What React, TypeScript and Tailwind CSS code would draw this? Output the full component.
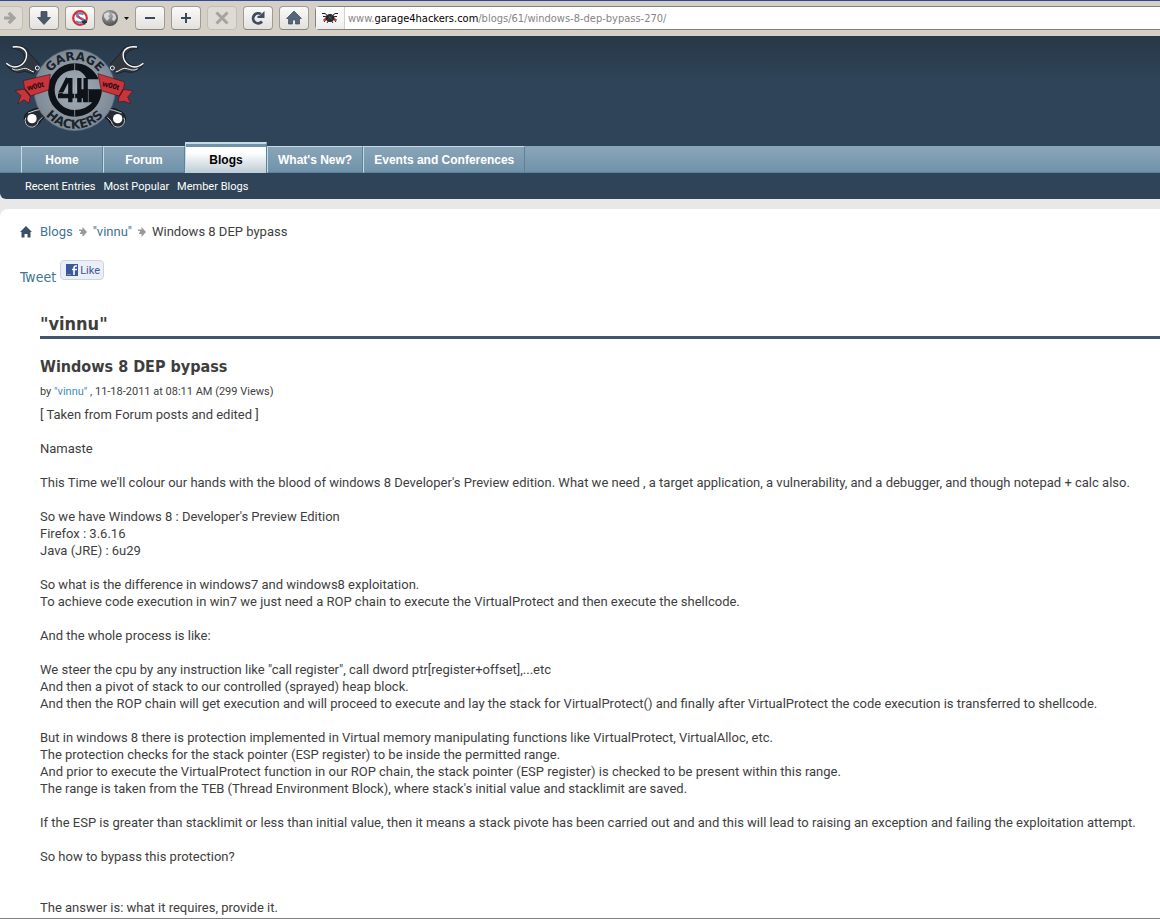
import type { ReactNode } from "react";

const tabs = [
  { label: "Home", active: false },
  { label: "Forum", active: false },
  { label: "Blogs", active: true },
  { label: "What's New?", active: false },
  { label: "Events and Conferences", active: false },
];

const subLinks = ["Recent Entries", "Most Popular", "Member Blogs"];

const paragraphs: string[][] = [
  ["[ Taken from Forum posts and edited ]"],
  ["Namaste"],
  [
    "This Time we'll colour our hands with the blood of windows 8 Developer's Preview edition. What we need , a target application, a vulnerability, and a debugger, and though notepad + calc also.",
  ],
  ["So we have Windows 8 : Developer's Preview Edition", "Firefox : 3.6.16", "Java (JRE) : 6u29"],
  [
    "So what is the difference in windows7 and windows8 exploitation.",
    "To achieve code execution in win7 we just need a ROP chain to execute the VirtualProtect and then execute the shellcode.",
  ],
  ["And the whole process is like:"],
  [
    'We steer the cpu by any instruction like "call register", call dword ptr[register+offset],...etc',
    "And then a pivot of stack to our controlled (sprayed) heap block.",
    "And then the ROP chain will get execution and will proceed to execute and lay the stack for VirtualProtect() and finally after VirtualProtect the code execution is transferred to shellcode.",
  ],
  [
    "But in windows 8 there is protection implemented in Virtual memory manipulating functions like VirtualProtect, VirtualAlloc, etc.",
    "The protection checks for the stack pointer (ESP register) to be inside the permitted range.",
    "And prior to execute the VirtualProtect function in our ROP chain, the stack pointer (ESP register) is checked to be present within this range.",
    "The range is taken from the TEB (Thread Environment Block), where stack's initial value and stacklimit are saved.",
  ],
  [
    "If the ESP is greater than stacklimit or less than initial value, then it means a stack pivote has been carried out and and this will lead to raising an exception and failing the exploitation attempt.",
  ],
  ["So how to bypass this protection?"],
];

function ToolButton({ label, faded, children }: { label: string; faded?: boolean; children: ReactNode }) {
  return (
    <button
      type="button"
      aria-label={label}
      className={
        faded
          ? "flex h-6 w-[30px] shrink-0 items-center justify-center rounded-sm border border-[#c3beb5] bg-[#dedad4]"
          : "flex h-6 w-[30px] shrink-0 items-center justify-center rounded-sm border border-[#a09c94] border-b-[#88857f] bg-linear-to-b from-[#fafaf9] to-[#e3e1de]"
      }
    >
      {children}
    </button>
  );
}

function Toolbar() {
  return (
    <div className="flex h-9 items-center gap-1.5 overflow-hidden border-t border-[#2f4a96] bg-[#d5d0c7] pb-px">
      <div className="-ml-[7px] flex shrink-0 gap-1.5">
        <ToolButton label="Forward" faded>
          <svg width="16" height="16" viewBox="0 0 16 16" className="ml-1">
            <path d="M2 6.500h6L5.500 4 8 1.800 14.200 8 8 14.200 5.500 12 8 9.500H2z" fill="#a5a39f" />
          </svg>
        </ToolButton>
        <ToolButton label="Downloads">
          <svg width="16" height="16" viewBox="0 0 16 16">
            <path d="M5 1.500h6v6h3.500L8 14.500 1.500 7.500H5z" fill="#4a5868" stroke="#33414f" strokeWidth=".7" />
          </svg>
        </ToolButton>
        <ToolButton label="Script blocker">
          <svg width="18" height="18" viewBox="0 0 18 18">
            <circle cx="9" cy="9" r="6.800" fill="#fff" stroke="#d92b2f" strokeWidth="2.200" />
            <path d="M4.500 4.500 14 13.500" stroke="#d92b2f" strokeWidth="1.600" />
            <path d="M12.500 5.500C10 3.500 5.500 4.200 6 6.800s7 2 6.500 4.700S7 14 5 12" fill="none" stroke="#6288bd" strokeWidth="2.200" />
            <path d="M7 7.500 11 10.500" stroke="#d92b2f" strokeWidth="1.500" />
            <path d="M13.500 10.500v5M11 13h5" stroke="#24344d" strokeWidth="1.800" />
          </svg>
        </ToolButton>
      </div>
      <button type="button" aria-label="Site menu" className="flex h-6 w-7 shrink-0 items-center justify-between">
        <svg width="18" height="18" viewBox="0 0 18 18">
          <defs>
            <radialGradient id="globe" cx=".4" cy=".3" r=".7">
              <stop offset="0" stopColor="#b4b4b4" />
              <stop offset="1" stopColor="#505050" />
            </radialGradient>
          </defs>
          <circle cx="9" cy="9" r="8" fill="url(#globe)" />
          <path d="M3 5l4-2 2 1.500-2 2.500 1.500 2L6 12 3 8zM10 4l4 1 1.500 4-2.500 3.500-2-2L12 7z" fill="#e6e6e6" opacity=".8" />
        </svg>
        <svg width="5" height="3" viewBox="0 0 5 3">
          <path d="M0 0h5L2.500 3z" fill="#111" />
        </svg>
      </button>
      <ToolButton label="Zoom out">
        <svg width="12" height="12" viewBox="0 0 12 12">
          <path d="M1 6h10" stroke="#39485a" strokeWidth="2" />
        </svg>
      </ToolButton>
      <ToolButton label="Zoom in">
        <svg width="12" height="12" viewBox="0 0 12 12">
          <path d="M1 6h10M6 1v10" stroke="#39485a" strokeWidth="2" />
        </svg>
      </ToolButton>
      <ToolButton label="Stop" faded>
        <svg width="14" height="14" viewBox="0 0 14 14">
          <path d="M1.500 1.500l11 11M12.500 1.500l-11 11" stroke="#a5a39f" strokeWidth="3" />
        </svg>
      </ToolButton>
      <ToolButton label="Reload">
        <svg width="16" height="16" viewBox="0 0 16 16">
          <path d="M11 4.200A5 5 0 1 0 12 11.500" fill="none" stroke="#3f4d5d" strokeWidth="2.800" />
          <path d="M14.500 1v7H7.500V6l2.500-.5z" fill="#3f4d5d" />
        </svg>
      </ToolButton>
      <ToolButton label="Home page">
        <svg width="16" height="16" viewBox="0 0 16 16">
          <path d="M8 1 .5 8.500h2V14h4v-4h3v4h4V8.500h2z" fill="#566677" stroke="#3c4a5a" strokeWidth=".7" />
        </svg>
      </ToolButton>
      <form
        className="-mr-1 flex h-6 grow items-center rounded-sm border border-[#82827e] bg-white"
        onSubmit={(event) => event.preventDefault()}
      >
        <button
          type="button"
          aria-label="Site identity"
          className="flex h-full w-[29px] shrink-0 items-center justify-center border-r border-[#d0d0d0] bg-linear-to-b from-white to-[#ededed]"
        >
          <svg width="18" height="14" viewBox="0 0 18 14">
            <path
              d="M1 2.500h3l3 2.500M17 2.500h-3l-3 2.500M2 5.500h2l3 1M16 5.500h-2l-3 1M3 11l2-2.500L8 7.500M15 11l-2-2.500-3-1M6 12l2-3M12 12l-2-3"
              fill="none"
              stroke="#222"
              strokeWidth="1"
            />
            <path d="M2.500 9.500 5 7.500M15.500 9.500 13 7.500" stroke="#d33" strokeWidth="1.800" />
            <ellipse cx="9" cy="7" rx="4.500" ry="4" fill="#252a2a" />
            <path d="M7 4.500l4 4M11 4.500l-4 4" stroke="#666" strokeWidth=".8" />
          </svg>
        </button>
        <a
          href="#address"
          className="pl-[3px] font-['DejaVu_Sans_Condensed','DejaVu_Sans',sans-serif] text-[11px] whitespace-nowrap text-[#858585]"
        >
          www.<span className="text-black">garage4hackers.com</span>/blogs/61/windows-8-dep-bypass-270/
        </a>
      </form>
    </div>
  );
}

function Wrench() {
  return (
    <g>
      <path
        d="M35 36C52 25 83 29 87 51L118 84 101 114 75 106C54 114 29 106 20 86 38 94 58 90 69 76 79 61 72 42 35 36z"
        fill="#30373f"
        stroke="#11171d"
        strokeWidth="2"
      />
      <path d="M38 33C58 30 73 35 79 50 83 73 66 92 44 93 33 93 25 87 19 82" fill="none" stroke="#fff" strokeWidth="4" />
      <path d="M36 98C52 108 62 97 76 97 86 98 92 106 102 108" fill="none" stroke="#eef1f4" strokeWidth="3" />
      <circle cx="112" cy="96" r="6" fill="#30373f" stroke="#eef1f4" strokeWidth="3" />
      <path d="M124 218 104 218 84 228C62 243 75 277 100 272 111 270 118 266 122 254L134 244z" fill="#252b31" stroke="#0f1318" strokeWidth="3" />
      <circle cx="96" cy="248" r="14" fill="#fff" />
      <path d="M77 245a20 20 0 1 0 38 11l12-12M84 231l24-8 14-3" fill="none" stroke="#dfe4e8" strokeWidth="2.500" />
    </g>
  );
}

function Logo() {
  return (
    <svg width="160" height="108" viewBox="0 0 480 324" role="img" aria-label="Garage Hackers">
      <defs>
        <radialGradient id="disc">
          <stop offset="0" stopColor="#a9b1b9" />
          <stop offset="1" stopColor="#7d8995" />
        </radialGradient>
        <path id="top-arc" d="M134 163a90 90 0 0 1 180 0" />
        <path id="bottom-arc" d="M109 163a115 115 0 0 0 230 0" />
      </defs>
      <Wrench />
      <g transform="translate(449 0) scale(-1 1)">
        <Wrench />
      </g>
      <circle cx="224" cy="162" r="122" fill="url(#disc)" stroke="#566878" strokeWidth="2" />
      <path
        d="M296 130C283 99 256 82 224 82A80 80 0 1 0 224 242C270 242 304 208 306 160H238V199H277C264 214 246 222 224 222A60 60 0 1 1 224 102C240 102 252 112 261 130z"
        fill="#0d1319"
      />
      <path d="M70 134 151 115 146 162 91 180 87 202 72 191 53 204 63 179 45 164 74 159z" fill="#c8343b" stroke="#4a151a" strokeWidth="2" />
      <path d="M294 113 374 138 370 160 399 165 383 183 392 203 373 196 354 198 358 180 304 164z" fill="#c8343b" stroke="#4a151a" strokeWidth="2" />
      <path d="M74 159 91 180M370 160 358 180" stroke="#4a151a" strokeWidth="4" />
      <path d="M224 82v20M224 222v20" stroke="#7d8892" strokeWidth="3" />
      <path d="M264 162v37M224 199h40" stroke="#929ca5" strokeWidth="3" />
      <path d="M204 127 180 174M174 180h88M211 126v73M238 126v73M257 126v73" fill="none" stroke="#0d1319" strokeWidth="13" />
      <path d="M224 126v73" stroke="#929ca5" strokeWidth="3" />
      <path d="M247 187v12" stroke="#929ca5" strokeWidth="4" />
      <path d="M174 170h30" stroke="#929ca5" strokeWidth="2" />
      <text fontFamily="DejaVu Sans, sans-serif" fontWeight="700" fontSize="36" fill="#1b232b" textAnchor="middle">
        <textPath href="#top-arc" startOffset="50%">
          GARAGE
        </textPath>
      </text>
      <text fontFamily="DejaVu Sans, sans-serif" fontWeight="700" fontSize="37" fill="#1b232b" textAnchor="middle">
        <textPath href="#bottom-arc" startOffset="50%">
          HACKERS
        </textPath>
      </text>
      <g fontFamily="Liberation Sans, sans-serif" fontWeight="700" fontSize="23" fill="#160709" textAnchor="middle">
        <text transform="translate(108 158) rotate(-13)">w00t</text>
        <text transform="translate(331 156) rotate(14)">w00t</text>
      </g>
    </svg>
  );
}

function CrumbArrow() {
  return (
    <svg width="8" height="10" viewBox="0 0 8 10" className="mx-1.5" aria-hidden="true">
      <path d="M3.500 0 8 5 3.500 10V7H1V5.500h1V4H0V2.500h3.500z" fill="#999" />
    </svg>
  );
}

export default function App() {
  return (
    <div className="min-h-screen bg-[#e8e8e8] font-[Roboto,'Noto_Sans',sans-serif] text-[13px] leading-[17px] text-[#3e3e3e]">
      <Toolbar />
      <header className="overflow-hidden rounded-bl-md bg-[#2f4458]">
        <div className="h-[110px] bg-linear-to-b from-[#273847] to-[#2f4458] to-40%">
          <a href="#top" className="inline-block">
            <Logo />
          </a>
        </div>
        <nav
          aria-label="Sections"
          className="flex h-[27px] items-end border-b border-[#5b849c] bg-linear-to-b from-[#8ba5b8] to-[#7093aa] pl-[21px] font-['Liberation_Sans',Arial,sans-serif]"
        >
          {tabs.map((tab) => (
            <a
              key={tab.label}
              href="#section"
              className={
                tab.active
                  ? "-mb-px flex h-[31px] min-w-[82px] shrink-0 items-center justify-center border-t-2 border-r border-l border-[#c5dbe6] border-r-[#5b849c] bg-linear-to-b from-white from-30% to-[#bccbd5] px-2.5 pt-[3px] text-xs font-bold text-black shadow-[inset_0_3px_0_#7093aa]"
                  : "-mb-px flex h-[27px] min-w-[82px] shrink-0 items-center justify-center border-t border-r border-b border-l border-t-[#c5dbe6] border-r-[#5b849c] border-b-[#5b849c] border-l-[#c5dbe6] px-2.5 text-xs font-bold text-white"
              }
            >
              {tab.label}
            </a>
          ))}
        </nav>
        <nav aria-label="Blog pages" className="flex h-[26px] items-center gap-2 pl-[25px] text-[11px] text-white">
          {subLinks.map((label) => (
            <a key={label} href="#page">
              {label}
            </a>
          ))}
        </nav>
      </header>
      <main className="mt-2.5 rounded-tl-lg border-b border-[#808080] bg-white pt-3.5 pb-0.5 pl-5">
        <nav aria-label="Breadcrumb" className="flex items-center">
          <a href="#home" aria-label="Home" className="mr-2">
            <svg width="12" height="12" viewBox="0 0 12 12">
              <path d="M6 0 0 6h1.500v5.500h3V8h3v3.500h3V6H12z" fill="#3a5068" />
            </svg>
          </a>
          <a href="#blogs" className="text-[#417394]">
            Blogs
          </a>
          <CrumbArrow />
          <a href="#vinnu" className="text-[#417394]">
            "vinnu"
          </a>
          <CrumbArrow />
          <span>Windows 8 DEP bypass</span>
        </nav>
        <div className="mt-5 flex h-[26px] items-start gap-1">
          <a
            href="#tweet"
            className="self-end font-['DejaVu_Sans_Condensed','DejaVu_Sans',sans-serif] text-sm leading-[17px] text-[#417394]"
          >
            Tweet
          </a>
          <button
            type="button"
            className="flex h-5 w-11 items-center gap-0.5 rounded-sm border border-[#cad4e7] bg-[#eceef5] pl-[5px] text-[11px] text-[#3b5998]"
          >
            <svg width="12" height="12" viewBox="0 0 12 12" className="shrink-0">
              <path d="M0 0h12v12H0z" fill="#3b5998" />
              <path d="M11 2H9.800Q8 2 8 4v7M6 5.500h5" fill="none" stroke="#fff" strokeWidth="1.600" />
              <path d="M1 10.500h4" stroke="#8292bb" />
            </svg>
            Like
          </button>
        </div>
        <article className="pl-5">
          <h1 className="mt-[27px] border-b-3 border-[#43566c] pb-px font-['DejaVu_Sans_Condensed','DejaVu_Sans',sans-serif] text-lg leading-[22px] font-bold">
            "vinnu"
          </h1>
          <h2 className="mt-[18px] font-['DejaVu_Sans_Condensed','DejaVu_Sans',sans-serif] text-base leading-5 font-bold">
            Windows 8 DEP bypass
          </h2>
          <p className="mt-2 text-[11px] leading-[14px]">
            by{" "}
            <a href="#vinnu" className="text-[#3b8fc0]">
              "vinnu"
            </a>{" "}
            , 11-18-2011 at 08:11 AM (299 Views)
          </p>
          <div className="mt-[7px] flex flex-col gap-[17px]">
            {paragraphs.map((lines) => (
              <p key={lines[0]}>
                {lines.map((line) => (
                  <span key={line} className="block">
                    {line}
                  </span>
                ))}
              </p>
            ))}
          </div>
          <p className="mt-[34px]">The answer is: what it requires, provide it.</p>
        </article>
      </main>
    </div>
  );
}
